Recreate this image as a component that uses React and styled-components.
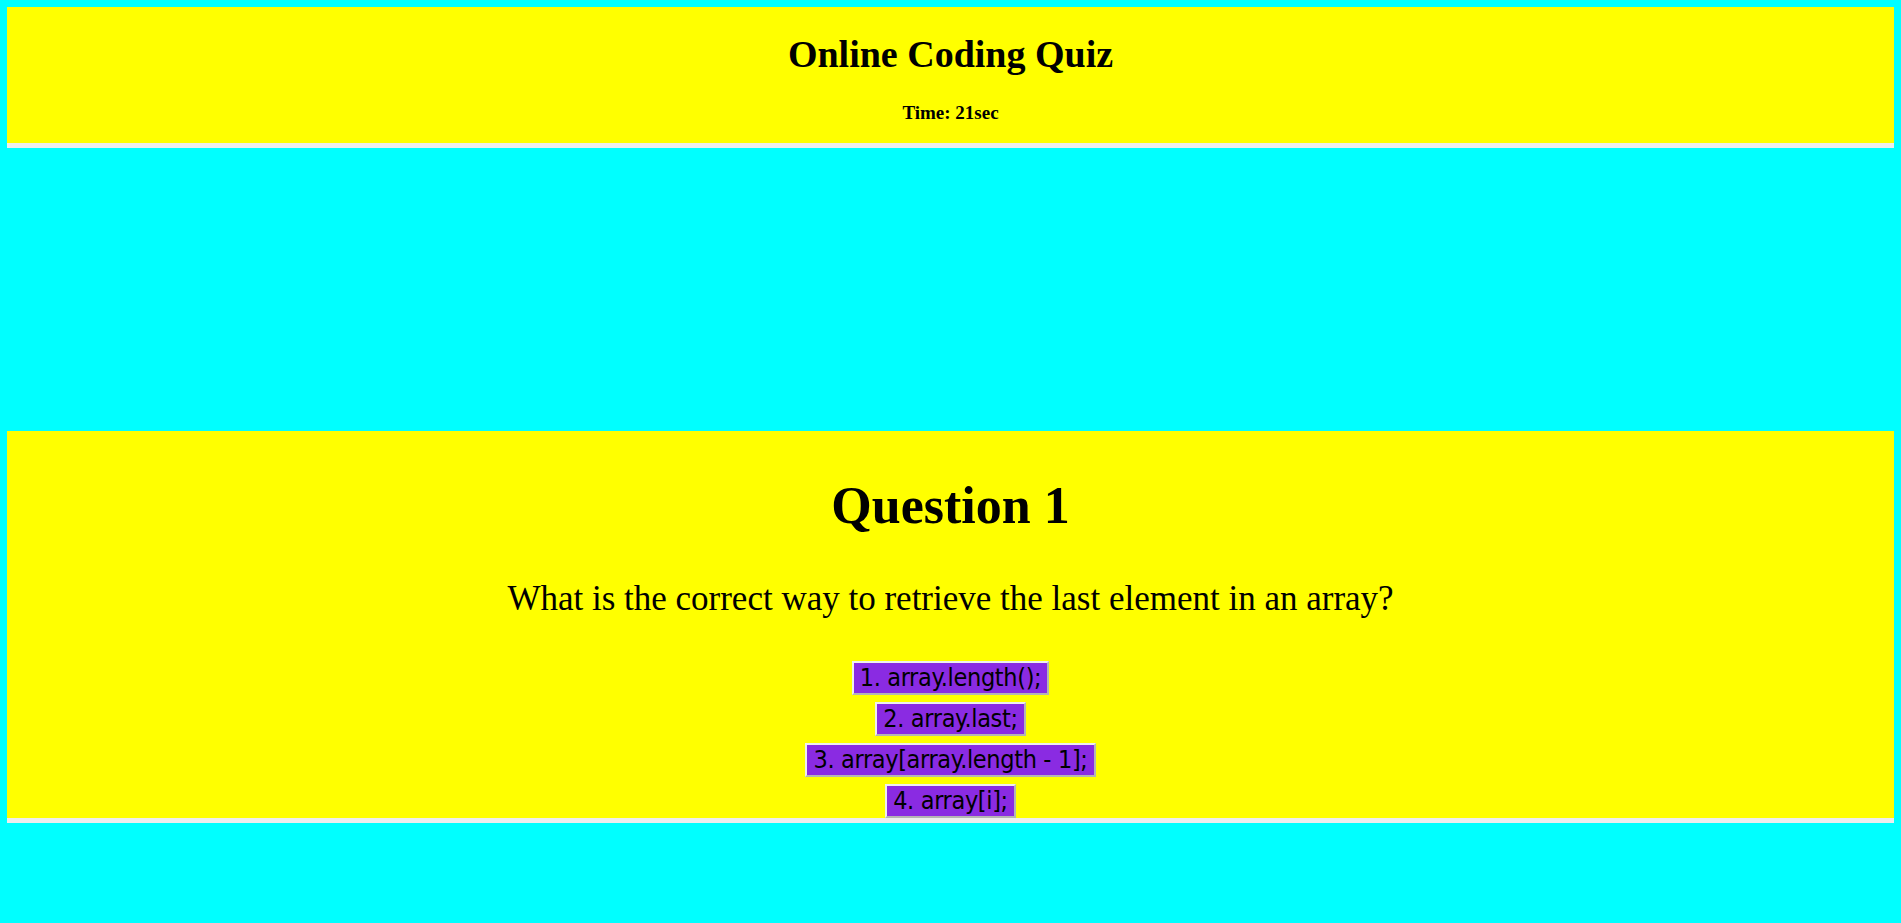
import styled, { createGlobalStyle } from "styled-components";

const GlobalStyle = createGlobalStyle`
  html, body {
    margin: 0;
    padding: 0;
    background-color: #00ffff;
  }
  body {
    font-family: "Liberation Serif", "Times New Roman", serif;
    color: #000000;
  }
`;

const question = {
  number: 1,
  text: "What is the correct way to retrieve the last element in an array?",
  choices: [
    "1. array.length();",
    "2. array.last;",
    "3. array[array.length - 1];",
    "4. array[i];",
  ],
};

const App = () => {
  return (
    <>
      <GlobalStyle />
      <Page>
        <Header>
          <Title>Online Coding Quiz</Title>
          <Timer>Time: 21sec</Timer>
        </Header>

        <QuestionCard>
          <QuestionTitle>Question {question.number}</QuestionTitle>
          <QuestionText>{question.text}</QuestionText>
          <Choices>
            {question.choices.map((choice, index) => (
              <ChoiceButton key={index}>{choice}</ChoiceButton>
            ))}
          </Choices>
        </QuestionCard>
      </Page>
    </>
  );
};

const Page = styled.main`
  padding: 7px;
  min-height: 923px;
  box-sizing: border-box;
`;

const Header = styled.header`
  background-color: #ffff00;
  border-bottom: 5px solid #eeeeee;
  text-align: center;
  padding: 25px 0 19px;
`;

const Title = styled.h1`
  margin: 0;
  font-size: 38px;
  line-height: 44px;
  font-weight: bold;
`;

const Timer = styled.h4`
  margin: 26px 0 0;
  font-size: 19px;
  line-height: 22px;
  font-weight: bold;
`;

const QuestionCard = styled.section`
  margin-top: 283px;
  background-color: #ffff00;
  border-bottom: 5px solid #eeeeee;
  text-align: center;
  padding: 46px 0 0;
`;

const QuestionTitle = styled.h2`
  margin: 0;
  font-size: 52px;
  line-height: 58px;
  font-weight: bold;
`;

const QuestionText = styled.p`
  margin: 44px 0 0;
  font-size: 35px;
  line-height: 40px;
  font-weight: normal;
`;

const Choices = styled.div`
  margin-top: 42px;
  display: flex;
  flex-direction: column;
  align-items: center;
  gap: 7px;
`;

const ChoiceButton = styled.button`
  font-family: "DejaVu Sans Condensed", "DejaVu Sans", sans-serif;
  font-stretch: condensed;
  font-size: 25px;
  letter-spacing: -0.35px;
  line-height: 28px;
  color: #000000;
  background-color: #8a2be2;
  padding: 1px 6px;
  border: 2px solid;
  border-color: #eeeeee #b4b4b4 #b4b4b4 #eeeeee;
  cursor: pointer;
`;

export default App;
